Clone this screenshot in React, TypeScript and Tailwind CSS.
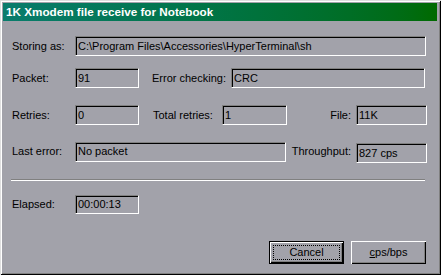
import React from "react";

const Field = ({ w, h = 20, children, className = "" }: { w: string; h?: number; children?: React.ReactNode; className?: string }) => (
  <div
    className={`${w} ${className} flex items-center border-t border-l border-t-[#808080] border-l-[#808080] border-b border-r border-b-white border-r-white shadow-[inset_1px_1px_0_#000] pl-[2px] text-black whitespace-nowrap overflow-hidden`}
    style={{ height: h }}
  >
    {children}
  </div>
);

export default function App() {
  return (
    <div
      className="w-[441px] h-[275px] bg-[#a2a2aa] relative flex flex-col p-[3px] shadow-[inset_1px_1px_0_#dfdfdf,inset_-1px_-1px_0_#000,inset_2px_2px_0_#fff,inset_-2px_-2px_0_#808080] text-[11px] leading-none"
      style={{ fontFamily: '"Liberation Sans", Arial, sans-serif' }}
    >
      <div className="h-[18px] w-[434px] bg-gradient-to-r from-[#0a7c6c] to-[#006a00] flex items-center pl-[3px]">
        <span className="text-white font-bold text-[11.7px]">1K Xmodem file receive for Notebook</span>
      </div>

      <div className="flex flex-col -ml-[3px] text-black">
        {/* Row 1 */}
        <div className="flex items-center mt-[15px]">
          <div className="w-[63px] ml-[12px]">Storing as:</div>
          <Field w="w-[351px]">C:\Program Files\Accessories\HyperTerminal\sh</Field>
        </div>

        {/* Row 2 */}
        <div className="flex items-center mt-[12px]">
          <div className="w-[63px] ml-[12px]">Packet:</div>
          <Field w="w-[64px]">91</Field>
          <div className="w-[79px] ml-[13px]">Error checking:</div>
          <Field w="w-[194px]">CRC</Field>
        </div>

        {/* Row 3 */}
        <div className="flex items-center mt-[17px]">
          <div className="w-[63px] ml-[12px]">Retries:</div>
          <Field w="w-[64px]">0</Field>
          <div className="w-[69px] ml-[14px]">Total retries:</div>
          <Field w="w-[65px]">1</Field>
          <div className="w-[69px] text-right pr-[5px]">File:</div>
          <Field w="w-[71px]">11K</Field>
        </div>

        {/* Row 4 */}
        <div className="flex items-center mt-[15px]">
          <div className="w-[63px] ml-[12px]">Last error:</div>
          <Field w="w-[211px]">No packet</Field>
          <div className="w-[70px] text-right pr-[5px]">Throughput:</div>
          <Field w="w-[71px]" className="mt-[3px]">827 cps</Field>
        </div>

        {/* Separator */}
        <div className="ml-[11px] w-[414px] mt-[16px] h-[2px] border-t border-t-[#808080] border-b border-b-white" />

        {/* Elapsed */}
        <div className="flex items-center mt-[14px]">
          <div className="w-[63px] ml-[12px]">Elapsed:</div>
          <Field w="w-[64px]" h={19}>00:00:13</Field>
        </div>

        {/* Buttons */}
        <div className="flex mt-[27px] ml-[269px] gap-[7px]">
          <div className="w-[75px] h-[23px] border border-black bg-[#a2a2aa] shadow-[inset_1px_1px_0_#fff,inset_-1px_-1px_0_#000,inset_-2px_-2px_0_#808080] flex items-center justify-center p-[3px]">
            <div className="w-full h-full border border-dotted border-black flex items-center justify-center">Cancel</div>
          </div>
          <div className="w-[75px] h-[23px] bg-[#a2a2aa] shadow-[inset_1px_1px_0_#fff,inset_-1px_-1px_0_#000,inset_-2px_-2px_0_#808080] flex items-center justify-center">
            <span><span className="underline">c</span>ps/bps</span>
          </div>
        </div>
      </div>
    </div>
  );
}
